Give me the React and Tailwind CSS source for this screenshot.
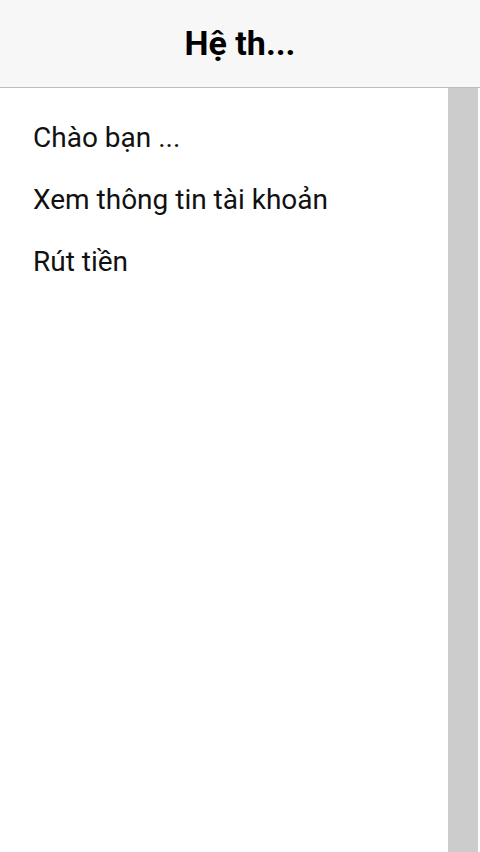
export default function App() {
  return (
    <div className="w-[480px] h-[852px] flex flex-col bg-white overflow-hidden" style={{ fontFamily: 'Roboto, "Noto Sans", sans-serif' }}>
      <div className="h-[88px] shrink-0 bg-[#f7f7f7] border-b border-[#bdbdbd] flex items-center justify-center">
        <h1 className="text-[34px] font-bold text-black">Hệ th...</h1>
      </div>
      <div className="flex flex-1">
        <div className="flex-1 pt-[19px] pl-[33px] flex flex-col">
          <div className="h-[62px] flex items-center text-[28px] text-[#111]">Chào bạn ...</div>
          <div className="h-[62px] flex items-center text-[28px] text-[#111]">Xem thông tin tài khoản</div>
          <div className="h-[62px] flex items-center text-[28px] text-[#111]">Rút tiền</div>
        </div>
        <div className="w-[30px] bg-[#cccccc] mr-[2px]" />
      </div>
    </div>
  );
}
